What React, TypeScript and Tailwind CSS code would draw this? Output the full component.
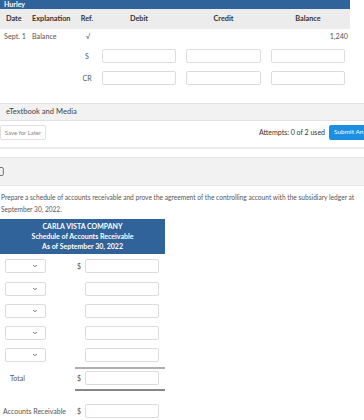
import { ChevronDown } from "lucide-react";

function Box({ className = "" }: { className?: string }) {
  return <div className={`h-[14px] rounded-[2px] border border-[#dcdcdc] bg-white ${className}`} />;
}

function Select() {
  return (
    <div className="flex h-[14px] w-[41px] items-center justify-end rounded-[2px] border border-[#dcdcdc] bg-white pr-[7px]">
      <ChevronDown size={6} strokeWidth={3.5} className="text-[#555]" />
    </div>
  );
}

function LedgerRow({ ref_, children }: { ref_: string; children?: React.ReactNode }) {
  return (
    <div className="flex h-[22px] items-center text-[7px] text-[#555]">
      <div className="w-[30px]" />
      <div className="w-[48px]" />
      <div className="w-[18px] text-center">{ref_}</div>
      {children}
    </div>
  );
}

export default function App() {
  const scheduleRows = [0, 1, 2, 3];

  return (
    <div className="h-[420px] w-[364px] overflow-hidden bg-white font-['Lato',sans-serif] leading-none text-[#333]">
      {/* ledger table */}
      <div className="w-[350px]">
        <div className="flex h-[9px] items-center bg-[#2f6399] pl-[4px] text-[7px] font-bold text-white">Hurley</div>
        <div className="flex h-[20px] items-center bg-[#ececec] text-[7.3px] font-bold text-[#333]">
          <div className="w-[30px] pl-[6px]">Date</div>
          <div className="w-[48px] pl-[2px]">Explanation</div>
          <div className="w-[18px] text-center">Ref.</div>
          <div className="ml-[6px] w-[74px] text-center">Debit</div>
          <div className="ml-[10px] w-[75px] text-center">Credit</div>
          <div className="ml-[10px] w-[74px] text-center">Balance</div>
        </div>
        <div className="flex h-[16px] items-center text-[7.2px] text-[#555]">
          <div className="w-[30px] pl-[4px]">Sept. 1</div>
          <div className="w-[48px] pl-[2px]">Balance</div>
          <div className="w-[18px] pl-[2px] text-center">√</div>
          <div className="ml-[6px] w-[74px]" />
          <div className="ml-[10px] w-[75px]" />
          <div className="ml-[10px] w-[77px] text-right">1,240</div>
        </div>
        <LedgerRow ref_="S">
          <Box className="ml-[6px] w-[74px]" />
          <Box className="ml-[10px] w-[75px]" />
          <Box className="ml-[10px] w-[74px]" />
        </LedgerRow>
        <LedgerRow ref_="CR">
          <Box className="ml-[6px] w-[74px]" />
          <Box className="ml-[10px] w-[75px]" />
          <Box className="ml-[10px] w-[74px]" />
        </LedgerRow>
      </div>

      {/* eTextbook */}
      <div className="mt-[14px] flex h-[18px] items-center border-y border-[#e2e2e2] bg-[#f2f2f2] pl-[6px] text-[7.6px] text-[#444]">
        eTextbook and Media
      </div>
      <div className="mt-[4px] flex h-[15px] items-center">
        <div className="flex h-[15px] w-[46px] items-center justify-center rounded-[2px] border border-[#e0e0e0] text-[6px] text-[#888]">
          Save for Later
        </div>
        <div className="ml-auto flex items-center">
          <span className="mr-[4px] text-[7px] text-[#333]">Attempts: 0 of 2 used</span>
          <div className="flex h-[15px] w-[35px] items-center overflow-hidden whitespace-nowrap rounded-l-[2px] bg-[#1c8fe3] pl-[5px] text-[6.5px] text-white">
            Submit Answer
          </div>
        </div>
      </div>
      <div className="mt-[7px] h-[2px] bg-[#ececec]" />

      {/* part b */}
      <div className="mt-[8px] flex h-[29px] items-center border-y border-[#e6e6e6] bg-[#f2f2f2]">
        <svg width="4" height="9" viewBox="0 0 4 9" className="-mt-[1px]">
          <path d="M0 0.5 H2 Q3.3 0.5 3.3 2 V7 Q3.3 8.5 2 8.5 H0" fill="none" stroke="#666" strokeWidth="0.9" />
        </svg>
      </div>
      <p className="mt-[5px] whitespace-nowrap pl-[1px] text-[6.6px] leading-[12px] text-[#555]">
        Prepare a schedule of accounts receivable and prove the agreement of the controlling account with the subsidiary ledger at
        <br />
        September 30, 2022.
      </p>

      <div className="mt-[4px] flex h-[35px] w-[165px] flex-col items-center justify-center gap-[3px] bg-[#2f6399] text-[7px] font-bold text-white">
        <div>CARLA VISTA COMPANY</div>
        <div>Schedule of Accounts Receivable</div>
        <div>As of September 30, 2022</div>
      </div>

      <div className="w-[165px] pt-[5px]">
        <div className="flex h-[14px] w-[159px] items-center">
          <div className="pl-[5px]"><Select /></div>
          <div className="ml-auto flex items-center">
            <span className="mr-[4px] text-[7px] text-[#555]">$</span>
            <Box className="w-[74px]" />
          </div>
        </div>
        {scheduleRows.map((r) => (
          <div key={r} className={`flex h-[14px] w-[159px] items-center ${r === 0 ? "mt-[9px]" : "mt-[8px]"}`}>
            <div className="pl-[5px]"><Select /></div>
            <Box className="ml-auto w-[74px]" />
          </div>
        ))}
        <div className="ml-[75px] mt-[5px] h-[2px] bg-[#b0b0b0]" />
        <div className="mt-[2px] flex h-[14px] w-[159px] items-center">
          <span className="pl-[10px] text-[7px] text-[#555]">Total</span>
          <div className="ml-auto flex items-center">
            <span className="mr-[4px] text-[7px] text-[#555]">$</span>
            <Box className="w-[74px]" />
          </div>
        </div>
        <div className="ml-[75px] mt-[4px] h-[2px] bg-[#888]" />
        <div className="mt-[13px] flex h-[14px] w-[159px] items-center">
          <span className="pl-[3px] text-[7px] text-[#555]">Accounts Receivable</span>
          <div className="ml-auto flex items-center">
            <span className="mr-[4px] text-[7px] text-[#555]">$</span>
            <Box className="w-[74px]" />
          </div>
        </div>
      </div>
    </div>
  );
}
